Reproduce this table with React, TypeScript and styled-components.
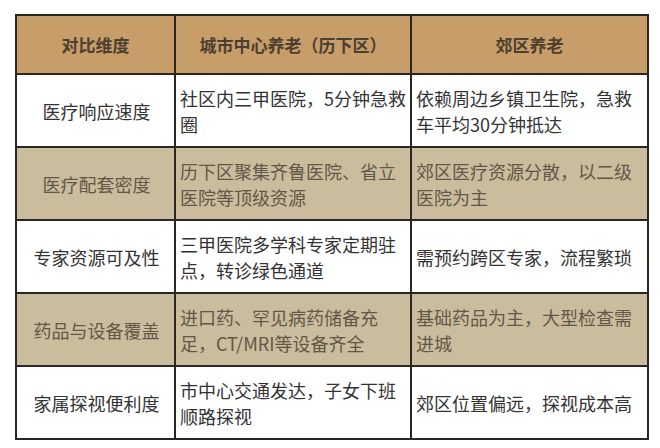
import * as React from 'react';
import styled, { createGlobalStyle } from 'styled-components';

const GlobalStyle = createGlobalStyle`
  html, body {
    margin: 0;
    padding: 0;
    background: #ffffff;
  }
  body {
    font-family: 'Noto Sans CJK SC', 'Noto Sans', sans-serif;
  }
`;

interface RowProps {
  $tone: 'white' | 'beige';
}

interface CellProps {
  $align?: 'left' | 'center';
}

const Page = styled.div`
  width: 660px;
  height: 448px;
  padding: 14px 13px 0 15px;
  box-sizing: border-box;
`;

const Table = styled.table`
  width: 632px;
  border-collapse: collapse;
  table-layout: fixed;
  border: 2px solid #2a2622;
`;

const HeadRow = styled.tr`
  height: 59px;
  background-color: #c79d69;
`;

const HeadCell = styled.th`
  border: 2px solid #2a2622;
  font-size: 17px;
  font-weight: 700;
  color: #4d3f30;
  text-align: center;
  vertical-align: middle;
  padding: 0 4px;
`;

const Row = styled.tr<RowProps>`
  height: 73px;
  background-color: ${(props) => (props.$tone === 'beige' ? '#cabd9e' : '#ffffff')};
  color: ${(props) => (props.$tone === 'beige' ? '#625746' : '#333333')};
`;

const Cell = styled.td<CellProps>`
  border: 2px solid #2a2622;
  font-size: 18px;
  line-height: 26px;
  text-align: ${(props) => props.$align || 'left'};
  vertical-align: middle;
  padding: 0 2px 0 4px;
`;

const rows = [
  {
    dim: '医疗响应速度',
    city: '社区内三甲医院，5分钟急救圈',
    suburb: '依赖周边乡镇卫生院，急救车平均30分钟抵达',
  },
  {
    dim: '医疗配套密度',
    city: '历下区聚集齐鲁医院、省立医院等顶级资源',
    suburb: '郊区医疗资源分散，以二级医院为主',
  },
  {
    dim: '专家资源可及性',
    city: '三甲医院多学科专家定期驻点，转诊绿色通道',
    suburb: '需预约跨区专家，流程繁琐',
  },
  {
    dim: '药品与设备覆盖',
    city: '进口药、罕见病药储备充足，CT/MRI等设备齐全',
    suburb: '基础药品为主，大型检查需进城',
  },
  {
    dim: '家属探视便利度',
    city: '市中心交通发达，子女下班顺路探视',
    suburb: '郊区位置偏远，探视成本高',
  },
];

const App: React.FunctionComponent = () => {
  return (
    <Page>
      <GlobalStyle />
      <Table>
        <colgroup>
          <col style={{ width: 159 }} />
          <col style={{ width: 236 }} />
          <col style={{ width: 237 }} />
        </colgroup>
        <thead>
          <HeadRow>
            <HeadCell>对比维度</HeadCell>
            <HeadCell>城市中心养老（历下区）</HeadCell>
            <HeadCell>郊区养老</HeadCell>
          </HeadRow>
        </thead>
        <tbody>
          {rows.map((row, i) => (
            <Row key={row.dim} $tone={i % 2 === 1 ? 'beige' : 'white'}>
              <Cell $align='center'>{row.dim}</Cell>
              <Cell>{row.city}</Cell>
              <Cell>{row.suburb}</Cell>
            </Row>
          ))}
        </tbody>
      </Table>
    </Page>
  );
};

export default App;
